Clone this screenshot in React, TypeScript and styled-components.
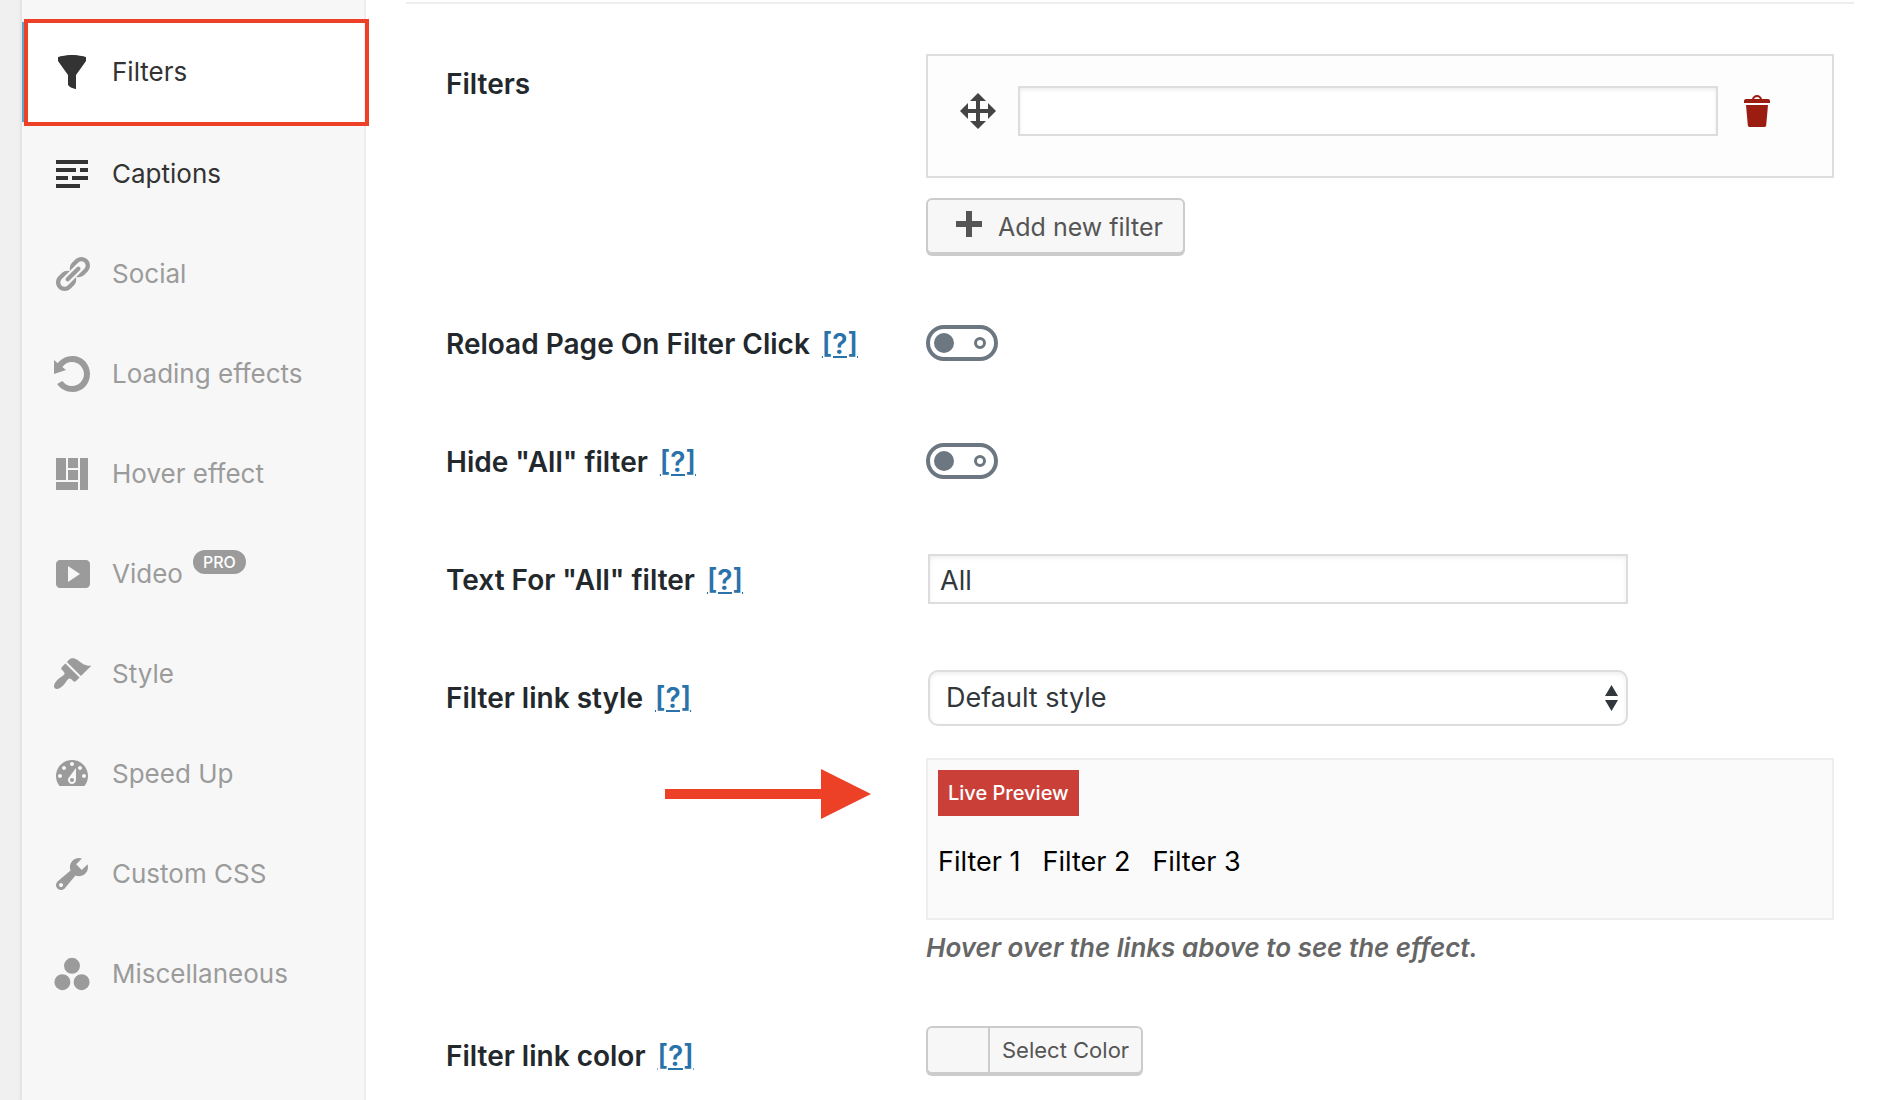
import React, { useState } from "react";
import styled, { createGlobalStyle, css } from "styled-components";

const GlobalStyle = createGlobalStyle`
  *, *::before, *::after { box-sizing: border-box; }
  body {
    margin: 0;
    background: #fff;
    color: #32373c;
    font-family: Inter, "Liberation Sans", sans-serif;
    font-size: 27px;
    line-height: 32px;
  }
  button, input, select { font: inherit; color: inherit; margin: 0; }
`;

const Page = styled.div`
  display: flex;
  min-height: 100vh;
`;

const Gutter = styled.div`
  flex: none;
  width: 22px;
  background: linear-gradient(to right, #f0f0f0 17px, #ececec);
  border-right: 2px solid #e5e5e5;
`;

const Sidebar = styled.nav`
  flex: none;
  width: 344px;
  padding-top: 20px;
  background: #f7f7f7;
  border-right: 2px solid #eee;
  font-size: 26px;
`;

const NavList = styled.ul`
  list-style: none;
  margin: 0;
  padding: 0;
`;

type Tone = "active" | "normal" | "muted";

const NavItem = styled.li<{ $tone: Tone }>`
  color: ${(p) => (p.$tone === "muted" ? "#9b9b9b" : "#333")};
  ${(p) =>
    p.$tone === "active" &&
    css`
      position: relative;
      background: #fff;
      border-top: 2px solid #eee;
      border-bottom: 2px solid #eee;
      box-shadow: inset 4px 0 0 #5ea5c8;

      &::after {
        content: "";
        position: absolute;
        inset: -3px -5px -4px 2px;
        border: 4px solid #ec4126;
        pointer-events: none;
      }
    `}
`;

const NavLink = styled.a`
  display: flex;
  align-items: center;
  gap: 20px;
  height: 100px;
  padding-left: 30px;
  color: inherit;
  text-decoration: none;
`;

const NavText = styled.span`
  display: flex;
  align-items: flex-start;
  gap: 10px;
  line-height: 48px;
`;

const ProBadge = styled.span`
  height: 24px;
  padding: 0 10px;
  border-radius: 12px;
  background: #9b9b9b;
  color: #fff;
  font-size: 16px;
  font-weight: 500;
  line-height: 24px;
`;

const Icon = styled.svg`
  flex: none;
  display: block;
  width: 40px;
  height: 40px;
  fill: currentColor;
`;

const Main = styled.main`
  flex: 1;
  min-width: 0;
  padding: 2px 32px 0 40px;
`;

const Divider = styled.hr`
  height: 2px;
  margin: 0 0 20px;
  border: 0;
  background: #eee;
`;

const Row = styled.div`
  display: grid;
  grid-template-columns: 480px minmax(0, 1fr);
  padding: 30px 20px 30px 40px;

  &:last-child {
    padding-bottom: 0;
  }
`;

const LabelCell = styled.div`
  position: relative;
  padding-top: 14px;
  color: #23282d;
  font-size: 28px;
  font-weight: 600;
`;

const HelpLink = styled.a`
  margin-left: 12px;
  color: #2a72aa;
  text-decoration: underline;
  text-decoration-thickness: 2px;
  text-underline-offset: 2px;
`;

const Pointer = styled.svg`
  position: absolute;
  top: 101px;
  left: 219px;
  width: 206px;
  height: 50px;
  fill: #ec4126;
`;

const Field = styled.div<{ $centered?: boolean }>`
  display: flex;
  flex-direction: column;
  align-items: flex-start;
  ${(p) =>
    p.$centered &&
    css`
      justify-content: center;
      min-height: 58px;
    `}
`;

const FilterCard = styled.div`
  display: flex;
  align-items: center;
  gap: 20px;
  width: 100%;
  padding: 30px 30px 40px;
  background: #fdfdfd;
  border: 2px solid #ddd;
`;

const IconButton = styled.button<{ $color: string; $cursor: string }>`
  flex: none;
  padding: 0;
  border: 0;
  background: none;
  color: ${(p) => p.$color};
  cursor: ${(p) => p.$cursor};
`;

const TextInput = styled.input<{ $spaced?: boolean }>`
  width: 700px;
  max-width: 100%;
  min-width: 0;
  height: 50px;
  margin: ${(p) => (p.$spaced ? "0 2px" : "0")};
  padding: 2px 10px 0;
  border: 2px solid #ddd;
  border-radius: 0;
  background: #fff;
  box-shadow: inset 0 2px 4px rgba(0, 0, 0, 0.07);
  outline: none;
`;

const SelectWrap = styled.div`
  position: relative;
  width: 700px;
  max-width: 100%;
  margin: 2px;
`;

const Select = styled.select`
  display: block;
  appearance: none;
  width: 100%;
  height: 56px;
  padding: 0 40px 0 16px;
  border: 2px solid #ddd;
  border-radius: 10px;
  background: #fff;
  box-shadow: inset 0 2px 4px rgba(0, 0, 0, 0.07);
  outline: none;
`;

const SelectArrows = styled.svg`
  position: absolute;
  top: 15px;
  right: 10px;
  width: 13px;
  height: 26px;
  fill: #32373c;
  pointer-events: none;
`;

const Button = styled.button<{ $small?: boolean }>`
  display: flex;
  align-items: center;
  height: ${(p) => (p.$small ? "48px" : "56px")};
  padding: 0;
  border: 2px solid #ccc;
  border-radius: 6px;
  background: #f7f7f7;
  box-shadow: 0 2px 0 #ccc;
  color: #555;
  font-size: ${(p) => (p.$small ? "22px" : "25px")};
  cursor: pointer;
`;

const AddButton = styled(Button)`
  gap: 10px;
  margin-top: 20px;
  padding: 2px 20px 0;
`;

const Swatch = styled.span`
  align-self: stretch;
  width: 60px;
`;

const SwatchLabel = styled.span`
  align-self: stretch;
  padding: 0 12px;
  border-left: 2px solid #ccc;
  line-height: 44px;
`;

const Toggle = styled.input`
  appearance: none;
  display: flex;
  align-items: center;
  justify-content: space-between;
  width: 72px;
  height: 36px;
  padding: 0 8px 0 4px;
  border: 4px solid #6c7781;
  border-radius: 18px;
  background: #fff;
  cursor: pointer;

  &::before {
    content: "";
    width: 20px;
    height: 20px;
    border-radius: 50%;
    background: #6c7781;
  }

  &::after {
    content: "";
    width: 12px;
    height: 12px;
    border: 3px solid #6c7781;
    border-radius: 50%;
  }

  &:checked {
    flex-direction: row-reverse;
    padding: 0 4px 0 8px;
  }
`;

const Preview = styled.div`
  width: 100%;
  min-height: 162px;
  margin-top: 30px;
  padding: 10px;
  background: #fafafa;
  border: 2px solid #eee;
`;

const PreviewTag = styled.span`
  display: inline-block;
  padding: 0 10px;
  background: #ca4039;
  color: #fff;
  font-size: 20px;
  font-weight: 500;
  line-height: 46px;
`;

const PreviewLinks = styled.div`
  display: flex;
  gap: 22px;
  margin-top: 30px;
`;

const PreviewLink = styled.a`
  color: #000;
  text-decoration: none;
`;

const Hint = styled.p`
  margin: 10px 0 0;
  color: #666;
  font-size: 26px;
  font-style: italic;
  font-weight: 600;
  line-height: 36px;
`;

const paths = {
  filter:
    "M3 4.5v-2s3.34-1 7-1 7 1 7 1v2l-5 7.03v6.97s-1.22-.09-2.25-.59S8 16.5 8 16.5v-4.97z",
  text: "M18 3v2H2V3h16zm-6 4v2H2V7h10zm6 0v2h-4V7h4zM8 11v2H2v-2h6zm10 0v2h-8v-2h8zm-4 4v2H2v-2h12z",
  link: "M17.74 2.76c1.68 1.69 1.68 4.41 0 6.1l-1.53 1.52c-1.12 1.12-2.7 1.47-4.14 1.09l2.62-2.61.76-.77.76-.76c.84-.84.84-2.2 0-3.04-.84-.85-2.2-.85-3.04 0l-.77.76-3.38 3.38c-.37-1.44-.02-3.02 1.1-4.14l1.52-1.53c1.69-1.68 4.42-1.68 6.1 0zM8.59 13.43l5.34-5.34c.42-.42.42-1.1 0-1.52-.44-.43-1.13-.39-1.53 0l-5.33 5.34c-.42.42-.42 1.1 0 1.52.44.43 1.13.39 1.52 0zm-.76 2.29l4.14-4.15c.38 1.44.03 3.02-1.09 4.14l-1.52 1.53c-1.69 1.68-4.41 1.68-6.1 0-1.68-1.68-1.68-4.42 0-6.1l1.53-1.52c1.12-1.12 2.7-1.47 4.14-1.1l-4.14 4.15c-.85.84-.85 2.2 0 3.05.84.84 2.2.84 3.04 0z",
  rotate:
    "M10.25 1.02c5.1 0 8.75 4.04 8.75 9s-3.65 9-8.75 9c-3.2 0-6.02-1.59-7.68-3.99l2.59-1.52c1.1 1.5 2.86 2.51 4.84 2.51 3.3 0 6-2.79 6-6s-2.7-6-6-6c-1.97 0-3.72 1-4.82 2.49L7 8.02l-6 2v-7L2.89 4.6c1.69-2.17 4.36-3.58 7.36-3.58z",
  layout: "M2 2h5v11H2V2zm6 0h5v5H8V2zm6 0h4v16h-4V2zM8 8h5v5H8V8zm-6 6h11v4H2v-4z",
  video:
    "M19 15V5c0-1.1-.9-2-2-2H4c-1.1 0-2 .9-2 2v10c0 1.1.9 2 2 2h13c1.1 0 2-.9 2-2zM8 14V6l6 4z",
  brush:
    "M14.48 11.06L7.41 3.99l1.5-1.5c.5-.56 2.3-.47 3.51.32 1.21.8 1.43 1.28 2.91 2.1 1.18.64 2.45 1.26 4.45.85zm-.71.71L6.7 4.7 4.93 6.47c-.39.39-.39 1.02 0 1.41l1.06 1.06c.39.39.39 1.03 0 1.42-.6.6-1.43 1.11-2.21 1.69-.35.26-.7.53-1.01.84C1.43 14.23.4 16.08 1.4 17.07c.99 1 2.84-.03 4.18-1.36.31-.31.58-.66.85-1.02.57-.78 1.08-1.61 1.69-2.21.39-.39 1.02-.39 1.41 0l1.06 1.06c.39.39 1.02.39 1.41 0z",
  gauge:
    "M3.76 16h12.48c1.1-1.37 1.76-3.11 1.76-5 0-4.42-3.58-8-8-8s-8 3.58-8 8c0 1.89.66 3.63 1.76 5zM10 4c.55 0 1 .45 1 1s-.45 1-1 1-1-.45-1-1 .45-1 1-1zM6 6c.55 0 1 .45 1 1s-.45 1-1 1-1-.45-1-1 .45-1 1-1zm8 0c.55 0 1 .45 1 1s-.45 1-1 1-1-.45-1-1 .45-1 1-1zm-5.37 5.55L12 7v6c0 1.1-.9 2-2 2s-2-.9-2-2c0-.57.24-1.08.63-1.45zM4 10c.55 0 1 .45 1 1s-.45 1-1 1-1-.45-1-1 .45-1 1-1zm12 0c.55 0 1 .45 1 1s-.45 1-1 1-1-.45-1-1 .45-1 1-1zm-5 3c0-.55-.45-1-1-1s-1 .45-1 1 .45 1 1 1 1-.45 1-1z",
  wrench:
    "M16.68 9.77c-1.34 1.34-3.3 1.67-4.95.99l-5.41 6.52c-.99.99-2.59.99-3.58 0s-.99-2.59 0-3.57l6.52-5.42c-.68-1.65-.35-3.61.99-4.95 1.28-1.28 3.12-1.62 4.72-1.06l-2.89 2.89 2.82 2.82 2.86-2.87c.53 1.58.18 3.39-1.08 4.65zM3.81 16.21c.4.39 1.04.39 1.43 0 .4-.4.4-1.04 0-1.43-.39-.4-1.03-.4-1.43 0-.39.39-.39 1.03 0 1.43z",
  circles:
    "M6 5.9a4 4 0 1 0 8 0a4 4 0 1 0-8 0zM1.2 14.1a4 4 0 1 0 8 0a4 4 0 1 0-8 0zM10.8 14.1a4 4 0 1 0 8 0a4 4 0 1 0-8 0z",
  move: "M19 10l-4 4v-3h-4v4h3l-4 4-4-4h3v-4H5v3l-4-4 4-4v3h4V5H6l4-4 4 4h-3v4h4V6z",
  plus: "M17 7v3h-5v5H9v-5H4V7h5V2h3v5h5z",
  trash:
    "M12 4h3c.6 0 1 .4 1 1v1H3V5c0-.6.5-1 1-1h3c.2-1.1 1.3-2 2.5-2s2.3.9 2.5 2zM8 4h3c-.2-.6-.9-1-1.5-1S8.2 3.4 8 4zM4 7h11l-.9 10.1c0 .5-.5.9-1 .9H5.9c-.5 0-.9-.4-1-.9L4 7z",
};

type IconName = keyof typeof paths;

function Glyph({ name }: { name: IconName }) {
  return (
    <Icon viewBox="0 0 20 20" aria-hidden="true">
      <path fillRule="evenodd" d={paths[name]} />
    </Icon>
  );
}

const navItems: { label: string; icon: IconName; tone: Tone; pro?: boolean }[] = [
  { label: "Filters", icon: "filter", tone: "active" },
  { label: "Captions", icon: "text", tone: "normal" },
  { label: "Social", icon: "link", tone: "muted" },
  { label: "Loading effects", icon: "rotate", tone: "muted" },
  { label: "Hover effect", icon: "layout", tone: "muted" },
  { label: "Video", icon: "video", tone: "muted", pro: true },
  { label: "Style", icon: "brush", tone: "muted" },
  { label: "Speed Up", icon: "gauge", tone: "muted" },
  { label: "Custom CSS", icon: "wrench", tone: "muted" },
  { label: "Miscellaneous", icon: "circles", tone: "muted" },
];

function FieldLabel({
  htmlFor,
  text,
  help = true,
  children,
}: {
  htmlFor: string;
  text: string;
  help?: boolean;
  children?: React.ReactNode;
}) {
  return (
    <LabelCell>
      <label htmlFor={htmlFor}>{text}</label>
      {help && <HelpLink href="#help">[?]</HelpLink>}
      {children}
    </LabelCell>
  );
}

export default function App() {
  const [filterName, setFilterName] = useState("");
  const [allText, setAllText] = useState("All");

  return (
    <Page>
      <GlobalStyle />
      <Gutter />
      <Sidebar aria-label="Gallery settings">
        <NavList>
          {navItems.map((item) => (
            <NavItem key={item.label} $tone={item.tone}>
              <NavLink href="#settings">
                <Glyph name={item.icon} />
                <NavText>
                  {item.label}
                  {item.pro && <ProBadge>PRO</ProBadge>}
                </NavText>
              </NavLink>
            </NavItem>
          ))}
        </NavList>
      </Sidebar>

      <Main>
        <Divider />
        <Row>
          <FieldLabel htmlFor="filter-name" text="Filters" help={false} />
          <Field>
            <FilterCard>
              <IconButton type="button" aria-label="Move filter" $color="#444" $cursor="move">
                <Glyph name="move" />
              </IconButton>
              <TextInput
                id="filter-name"
                type="text"
                value={filterName}
                onChange={(e) => setFilterName(e.target.value)}
              />
              <IconButton type="button" aria-label="Delete filter" $color="#9b1c10" $cursor="pointer">
                <Glyph name="trash" />
              </IconButton>
            </FilterCard>
            <AddButton type="button">
              <Glyph name="plus" />
              Add new filter
            </AddButton>
          </Field>
        </Row>

        <Row>
          <FieldLabel htmlFor="reload-page" text="Reload Page On Filter Click" />
          <Field $centered>
            <Toggle id="reload-page" type="checkbox" />
          </Field>
        </Row>

        <Row>
          <FieldLabel htmlFor="hide-all" text={'Hide "All" filter'} />
          <Field $centered>
            <Toggle id="hide-all" type="checkbox" />
          </Field>
        </Row>

        <Row>
          <FieldLabel htmlFor="all-text" text={'Text For "All" filter'} />
          <Field $centered>
            <TextInput
              id="all-text"
              type="text"
              $spaced
              value={allText}
              onChange={(e) => setAllText(e.target.value)}
            />
          </Field>
        </Row>

        <Row>
          <FieldLabel htmlFor="link-style" text="Filter link style">
            <Pointer viewBox="0 0 206 50" aria-hidden="true">
              <path d="M0 20h156V0l50 25-50 25V30H0z" />
            </Pointer>
          </FieldLabel>
          <Field>
            <SelectWrap>
              <Select id="link-style" defaultValue="default">
                <option value="default">Default style</option>
              </Select>
              <SelectArrows viewBox="0 0 13 26" aria-hidden="true">
                <path d="M6.500 0L13 11H0zM0 15h13L6.500 26z" />
              </SelectArrows>
            </SelectWrap>
            <Preview>
              <PreviewTag>Live Preview</PreviewTag>
              <PreviewLinks>
                <PreviewLink href="#filter-1">Filter 1</PreviewLink>
                <PreviewLink href="#filter-2">Filter 2</PreviewLink>
                <PreviewLink href="#filter-3">Filter 3</PreviewLink>
              </PreviewLinks>
            </Preview>
            <Hint>Hover over the links above to see the effect.</Hint>
          </Field>
        </Row>

        <Row>
          <FieldLabel htmlFor="link-color" text="Filter link color" />
          <Field>
            <Button id="link-color" type="button" $small>
              <Swatch />
              <SwatchLabel>Select Color</SwatchLabel>
            </Button>
          </Field>
        </Row>
      </Main>
    </Page>
  );
}
